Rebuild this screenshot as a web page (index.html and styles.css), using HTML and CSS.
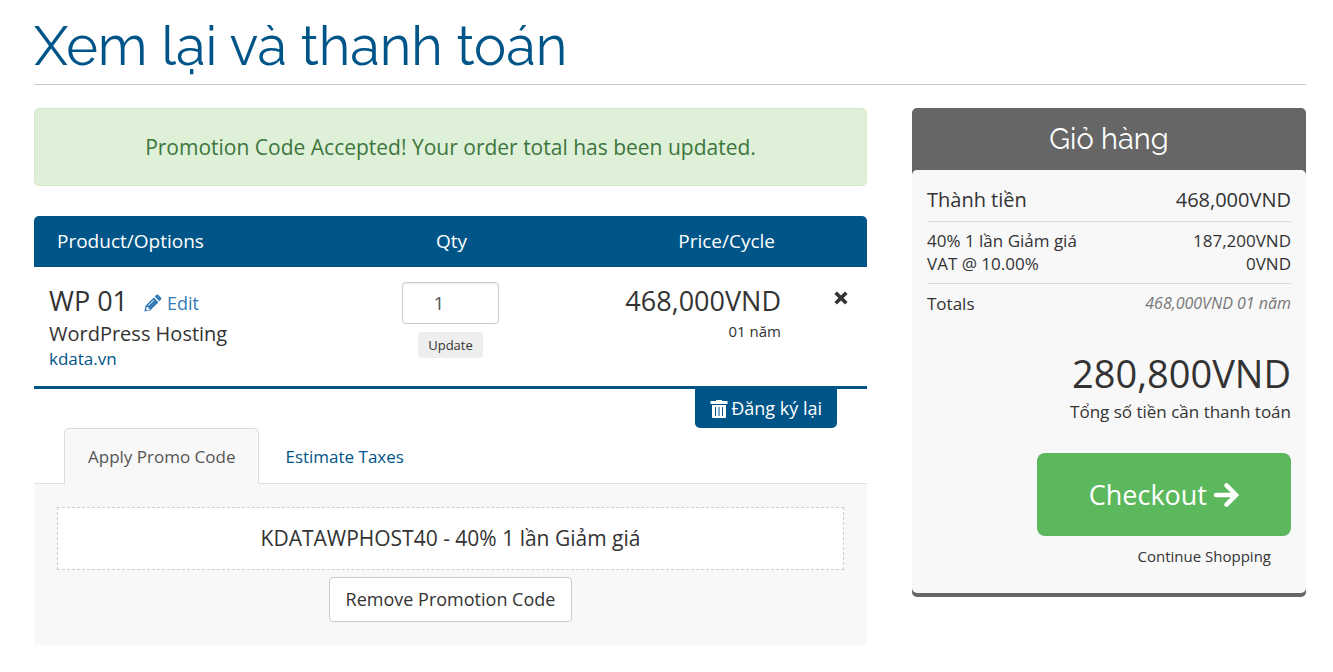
FILE: index.html
```html
<!DOCTYPE html>
<html lang="vi">
<head>
    <meta charset="UTF-8">
    <meta name="viewport" content="width=device-width, initial-scale=1.0">
    <title>Xem lại và thanh toán</title>
    <link rel="stylesheet" href="styles.css">
</head>
<body>

    <header class="page-header">
        <h1>Xem lại và thanh toán</h1>
    </header>

    <div class="layout">
        <main>
            <div class="alert" role="alert">Promotion Code Accepted! Your order total has been updated.</div>

            <table class="cart">
                <thead>
                    <tr>
                        <th class="col-product">Product/Options</th>
                        <th class="col-qty">Qty</th>
                        <th class="col-price">Price/Cycle</th>
                        <th class="col-remove"></th>
                    </tr>
                </thead>
                <tbody>
                    <tr>
                        <td class="col-product">
                            <div class="item-title">
                                <span class="item-name">WP 01</span>
                                <a class="edit" href="#">
                                    <svg class="icon-pencil" viewBox="0 0 18 18" aria-hidden="true">
                                        <path fill="currentColor" fill-rule="evenodd" d="M12.2 1.1a1.6 1.6 0 0 1 2.2 0l2.5 2.5a1.6 1.6 0 0 1 0 2.2l-1.5 1.5-4.7-4.7zM9.8 3.5l4.7 4.7-8.3 8.3L.4 17.6l1.1-5.8zM2.7 12.9l-.6 2.8.9.9 2.6-.6v-1.4H4.2v-1.5zM9.7 5.8l-5.7 5.7.5.5 5.7-5.7z"/>
                                    </svg>
                                    Edit
                                </a>
                            </div>
                            <div class="item-group">WordPress Hosting</div>
                            <div class="item-domain">kdata.vn</div>
                        </td>
                        <td class="col-qty">
                            <input class="qty" type="number" value="1" aria-label="Qty">
                            <button class="update" type="button">Update</button>
                        </td>
                        <td class="col-price">
                            <div class="item-price">468,000VND</div>
                            <div class="item-cycle">01 năm</div>
                        </td>
                        <td class="col-remove">
                            <button class="remove" type="button" aria-label="Remove">
                                <svg class="icon-times" viewBox="0 0 14 14" aria-hidden="true">
                                    <path d="M1.7 1.7l10.6 10.6M12.3 1.7L1.7 12.3" stroke="currentColor" stroke-width="3.6"/>
                                </svg>
                            </button>
                        </td>
                    </tr>
                </tbody>
            </table>

            <div class="empty-cart">
                <button class="empty" type="button">
                    <svg class="icon-trash" viewBox="0 0 18 20" aria-hidden="true">
                        <path fill="currentColor" fill-rule="evenodd" d="M6 1h6v1h5.5v3H.5V2H6zM2 6h14v12a1 1 0 0 1-1 1H3a1 1 0 0 1-1-1zM5 8v9h1V8zM8.5 8v9h1V8zM12 8v9h1V8z"/>
                    </svg>
                    Đăng ký lại
                </button>
            </div>

            <nav class="tabs">
                <a class="tab active" href="#promo">Apply Promo Code</a>
                <a class="tab" href="#taxes">Estimate Taxes</a>
            </nav>
            <section class="tab-panel" id="promo">
                <div class="promo-code">KDATAWPHOST40 - 40% 1 lần Giảm giá</div>
                <button class="remove-promo" type="button">Remove Promotion Code</button>
            </section>
        </main>

        <aside class="summary">
            <h2>Giỏ hàng</h2>
            <div class="summary-body">
                <div class="line subtotal"><span>Thành tiền</span><span>468,000VND</span></div>
                <div class="taxes">
                    <div class="line"><span>40% 1 lần Giảm giá</span><span>187,200VND</span></div>
                    <div class="line"><span>VAT @ 10.00%</span><span>0VND</span></div>
                </div>
                <div class="line recurring"><span>Totals</span><em>468,000VND 01 năm</em></div>
                <div class="total-amount">280,800VND</div>
                <div class="total-label">Tổng số tiền cần thanh toán</div>
                <div class="actions">
                    <button class="checkout" type="button">
                        Checkout
                        <svg class="icon-arrow" viewBox="0 0 26 26" aria-hidden="true">
                            <path d="M3 13h20M13.5 3.4l9.6 9.6-9.6 9.6" fill="none" stroke="currentColor" stroke-width="4.4" stroke-linecap="round"/>
                        </svg>
                    </button>
                    <a class="continue" href="#">Continue Shopping</a>
                </div>
            </div>
        </aside>
    </div>

</body>
</html>
```
FILE: styles.css
```css
* {
    margin: 0;
    padding: 0;
    box-sizing: border-box;
}

body {
    font-family: "Open Sans", sans-serif;
    font-size: 17px;
    line-height: 24px;
    color: #333;
    background-color: #fff;
    padding: 8px 27px 27px 34px;
}

button,
input {
    font-family: inherit;
    cursor: pointer;
}

a {
    text-decoration: none;
}

.page-header {
    border-bottom: 1px solid #ccc;
    margin-bottom: 23px;
}

.page-header h1 {
    font-family: Raleway, Lato, sans-serif;
    font-size: 54px;
    font-weight: 400;
    line-height: 76px;
    color: #058;
}

.layout {
    display: grid;
    grid-template-columns: 833fr 394fr;
    gap: 45px;
    align-items: start;
}

.alert {
    padding: 23px;
    margin-bottom: 30px;
    border: 1px solid #d6e9c6;
    border-radius: 5px;
    background-color: #dff0d8;
    color: #3c763d;
    font-size: 21px;
    line-height: 30px;
    text-align: center;
}

/* Cart items */
.cart {
    width: 100%;
    table-layout: fixed;
    border-spacing: 0;
    border-bottom: 3px solid #058;
}

.cart th {
    padding: 12px 21px 12px 23px;
    background-color: #058;
    color: #fff;
    font-size: 19px;
    font-weight: 400;
    line-height: 27px;
}

.cart th:first-child {
    border-top-left-radius: 5px;
}

.cart th:last-child {
    border-top-right-radius: 5px;
}

.cart td {
    padding: 15px;
    vertical-align: top;
}

.col-product {
    width: 42%;
    text-align: left;
}

.col-qty {
    width: 16%;
    text-align: center;
}

.col-price {
    text-align: right;
}

.col-remove {
    width: 71px;
    text-align: right;
}

.item-title {
    display: flex;
    align-items: center;
    gap: 16px;
}

.item-name,
.item-price {
    font-size: 27px;
    line-height: 38px;
}

.edit {
    display: flex;
    align-items: center;
    gap: 5px;
    padding-top: 4px;
    font-size: 18px;
    color: #337ab7;
}

.icon-pencil {
    width: 18px;
    height: 18px;
}

.item-group {
    font-size: 20px;
    line-height: 27px;
}

.item-domain {
    color: #058;
}

.item-cycle {
    font-size: 15px;
    line-height: 22px;
}

.qty {
    display: block;
    width: 97px;
    height: 42px;
    margin: 0 auto 8px;
    padding: 6px 20px 6px 12px;
    border: 1px solid #ccc;
    border-radius: 4px;
    box-shadow: inset 0 1px 1px rgba(0, 0, 0, 0.075);
    color: #555;
    font-size: 19px;
    text-align: center;
}

.update {
    padding: 4px 10px;
    border: none;
    border-radius: 4px;
    background-color: #eee;
    color: #333;
    font-size: 13px;
    line-height: 18px;
}

.remove {
    padding: 0 4px;
    border: none;
    background: none;
    color: #333;
}

.icon-times {
    display: block;
    width: 14px;
    height: 32px;
}

.empty-cart {
    display: flex;
    justify-content: flex-end;
    padding-right: 30px;
}

.empty {
    display: flex;
    align-items: center;
    gap: 3px;
    padding: 6px 15px;
    border: none;
    border-radius: 0 0 5px 5px;
    background-color: #058;
    color: #fff;
    font-size: 18px;
    line-height: 27px;
}

.icon-trash {
    width: 18px;
    height: 20px;
}

/* Promo code / taxes tabs */
.tabs {
    display: flex;
    padding: 0 30px;
    border-bottom: 1px solid #ddd;
}

.tab {
    padding: 16px 23px 14px;
    margin-bottom: -1px;
    border: 1px solid transparent;
    border-radius: 5px 5px 0 0;
    color: #058;
}

.tab + .tab {
    margin-left: 2px;
}

.tab.active {
    background-color: #f8f8f8;
    border-color: #ddd;
    border-bottom-color: #f8f8f8;
    color: #555;
}

.tab-panel {
    padding: 23px;
    background-color: #f8f8f8;
    text-align: center;
}

.promo-code {
    padding: 16px;
    margin-bottom: 7px;
    border: 1px dashed #ccc;
    background-color: #fff;
    font-size: 21px;
    line-height: 29px;
}

.remove-promo {
    padding: 9px 16px;
    border: 1px solid #ccc;
    border-radius: 4px;
    background-color: #fff;
    color: #333;
    font-size: 18px;
    line-height: 25px;
}

/* Order summary */
.summary {
    background-color: #666;
    border-bottom: 4px solid #666;
    border-radius: 5px;
}

.summary h2 {
    font-family: Raleway, Lato, sans-serif;
    font-size: 29px;
    font-weight: 400;
    line-height: 62px;
    color: #fff;
    text-align: center;
}

.summary-body {
    padding: 15px;
    border-radius: 5px;
    background-color: #f8f8f8;
}

.line {
    display: flex;
    justify-content: space-between;
    line-height: 23px;
}

.subtotal {
    padding-bottom: 7px;
    font-size: 20px;
    line-height: 29px;
}

.taxes {
    padding: 7px 0 8px;
    border-top: 1px solid #ddd;
    border-bottom: 1px solid #ddd;
}

.recurring {
    padding-top: 8px;
}

.recurring em {
    font-size: 16px;
    line-height: 22px;
    color: #777;
}

.total-amount {
    margin-top: 30px;
    font-size: 38px;
    line-height: 56px;
    text-align: right;
}

.total-label {
    line-height: 22px;
    text-align: right;
}

.actions {
    display: flex;
    flex-direction: column;
    align-items: flex-end;
    padding-top: 30px;
}

.checkout {
    display: flex;
    align-items: center;
    gap: 6px;
    padding: 23px 52px;
    border: none;
    border-radius: 8px;
    background-color: #5cb85c;
    color: #fff;
    font-size: 27px;
    line-height: 37px;
}

.icon-arrow {
    width: 26px;
    height: 26px;
}

.continue {
    padding: 8px 20px 10px;
    color: #333;
    font-size: 15px;
}
```
